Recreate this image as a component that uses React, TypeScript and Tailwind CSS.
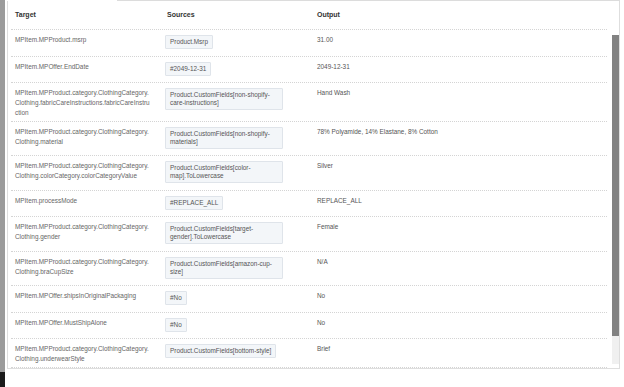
import React from 'react';

interface MappingRow {
  target: string;
  source: string;
  output: string;
}

const rows: MappingRow[] = [
  { target: 'MPItem.MPProduct.msrp', source: 'Product.Msrp', output: '31.00' },
  { target: 'MPItem.MPOffer.EndDate', source: '#2049-12-31', output: '2049-12-31' },
  {
    target: 'MPItem.MPProduct.category.ClothingCategory.Clothing.fabricCareInstructions.fabricCareInstruction',
    source: 'Product.CustomFields[non-shopify-care-instructions]',
    output: 'Hand Wash',
  },
  {
    target: 'MPItem.MPProduct.category.ClothingCategory.Clothing.material',
    source: 'Product.CustomFields[non-shopify-materials]',
    output: '78% Polyamide, 14% Elastane, 8% Cotton',
  },
  {
    target: 'MPItem.MPProduct.category.ClothingCategory.Clothing.colorCategory.colorCategoryValue',
    source: 'Product.CustomFields[color-map].ToLowercase',
    output: 'Silver',
  },
  { target: 'MPItem.processMode', source: '#REPLACE_ALL', output: 'REPLACE_ALL' },
  {
    target: 'MPItem.MPProduct.category.ClothingCategory.Clothing.gender',
    source: 'Product.CustomFields[target-gender].ToLowercase',
    output: 'Female',
  },
  {
    target: 'MPItem.MPProduct.category.ClothingCategory.Clothing.braCupSize',
    source: 'Product.CustomFields[amazon-cup-size]',
    output: 'N/A',
  },
  { target: 'MPItem.MPOffer.shipsInOriginalPackaging', source: '#No', output: 'No' },
  { target: 'MPItem.MPOffer.MustShipAlone', source: '#No', output: 'No' },
  {
    target: 'MPItem.MPProduct.category.ClothingCategory.Clothing.underwearStyle',
    source: 'Product.CustomFields[bottom-style]',
    output: 'Brief',
  },
];

function App() {
  return (
    <div className="flex h-[387px] w-[624px] overflow-hidden bg-white font-['Liberation_Sans',Arial,sans-serif] text-[6.4px]">
      {/* window edge on the left */}
      <div className="flex w-[5px] flex-col">
        <div className="flex-1 bg-[#9b9b9b]" />
        <div className="h-[15px] bg-[#1a1a1a]" />
      </div>

      <div className="ml-[2px] flex w-[613px] flex-col">
        {/* tab strip line */}
        <div className="flex h-px">
          <div className="w-[110px]" />
          <div className="flex-1 bg-[#dcdcdc]" />
        </div>

        {/* Mapping panel */}
        <div className="flex h-[368px] flex-col border-x border-b border-[#dedede]">
          <div className="ml-[3px] mr-[12px] flex h-[29px] shrink-0 items-center border-b border-dotted border-[#d4d4d4] pl-[4px] text-[7px] font-bold text-[#333]">
            <div className="w-[150px] shrink-0">Target</div>
            <div className="w-[152px] shrink-0 pl-[2px]">Sources</div>
            <div>Output</div>
          </div>

          <div className="flex min-h-0 flex-1">
            <div className="min-w-0 flex-1 overflow-hidden">
              {rows.map((row, i) => (
                <div
                  key={i}
                  className="ml-[3px] mr-[5px] flex items-start border-b border-dotted border-[#d4d4d4] pb-[6.5px] pl-[4px] pt-[5px]"
                >
                  <div className="-mb-[4px] w-[150px] shrink-0">
                    <div className="w-[21.3em] break-all leading-[10px] text-[#666]">{row.target}</div>
                  </div>
                  <div className="w-[152px] shrink-0">
                    <span className="inline-block max-w-[118px] rounded-[1px] border border-[#dfe4ea] bg-[#f3f6f9] px-[4px] py-[2px] leading-[8px] text-[#555]">
                      {row.source}
                    </span>
                  </div>
                  <div className="leading-[10px] text-[#555]">{row.output}</div>
                </div>
              ))}
            </div>

            {/* scrollbar */}
            <div className="flex w-[7px] shrink-0 flex-col pb-[4px] pt-[5px]">
              <div className="flex-1 bg-[#f0f0f0]">
                <div className="h-[301px] bg-[#828282]" />
              </div>
            </div>
          </div>
        </div>
      </div>
    </div>
  );
}

export default App;
